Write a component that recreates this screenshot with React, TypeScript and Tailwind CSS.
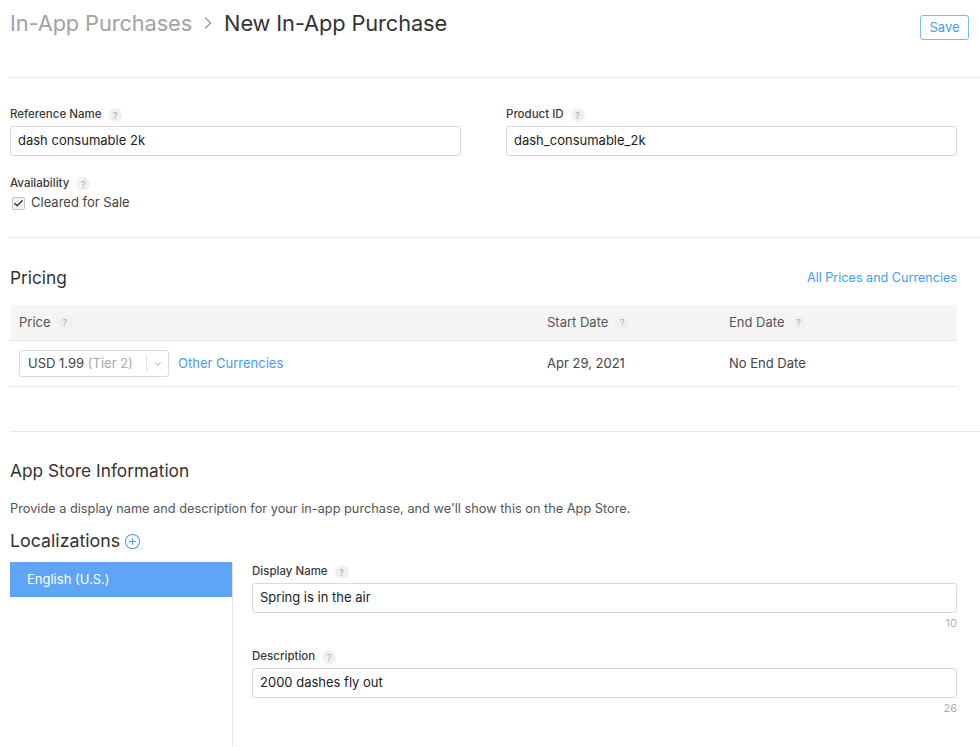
import { ChevronRight, ChevronDown, Check, CirclePlus } from 'lucide-react';

const font = { fontFamily: 'Inter, "Helvetica Neue", Arial, sans-serif' };

function Help() {
  return (
    <span className="ml-[7px] inline-flex h-[14px] w-[14px] items-center justify-center rounded-full bg-[#f0f0f0] text-[9px] font-normal leading-none text-[#a8a8a8]">
      ?
    </span>
  );
}

function Label({ children }: { children: React.ReactNode }) {
  return (
    <div className="flex h-[16px] items-center text-[11.5px] font-medium text-[#3a3a3a]">
      {children}
      <Help />
    </div>
  );
}

function TextBox({ value }: { value: string }) {
  return (
    <div className="flex h-[30px] items-center rounded-[3px] border border-[#d9d9d9] bg-white px-[7px] text-[13px] text-[#222]">
      {value}
    </div>
  );
}

export default function App() {
  return (
    <div className="min-h-[747px] w-full bg-white pl-[10px] text-[#333]" style={font}>
      {/* Cabeçalho */}
      <div className="flex h-[78px] items-start justify-between border-b border-[#e6e6e6] pr-[11px]">
        <div className="mt-[8px] flex items-center text-[21.8px] leading-[30px] tracking-[-0.005em]">
          <span className="text-[#a3a3a3]">In-App Purchases</span>
          <ChevronRight className="mx-[6px] h-[20px] w-[20px] text-[#9a9a9a]" strokeWidth={1.6} />
          <span className="text-[#333]">New In-App Purchase</span>
        </div>
        <button className="mt-[15px] h-[25px] w-[49px] rounded-[3px] border border-[#7fb8f6] text-[13px] text-[#4a9bf0]">
          Save
        </button>
      </div>

      {/* Dados gerais */}
      <div className="border-b border-[#e6e6e6] pb-[26px] pr-[23px] pt-[29px]">
        <div className="grid grid-cols-2 gap-[45px]">
          <div>
            <Label>Reference Name</Label>
            <div className="mt-[3px]">
              <TextBox value="dash consumable 2k" />
            </div>
          </div>
          <div>
            <Label>Product ID</Label>
            <div className="mt-[3px]">
              <TextBox value="dash_consumable_2k" />
            </div>
          </div>
        </div>
        <div className="mt-[20px]">
          <Label>Availability</Label>
          <div className="mt-[3px] flex h-[16px] items-center text-[13px] text-[#444]">
            <span className="ml-[2px] mr-[6px] flex h-[13px] w-[13px] items-center justify-center rounded-[2px] border border-[#c4c4c4] bg-[#f2f2f2]">
              <Check className="h-[11px] w-[11px] text-[#333]" strokeWidth={3} />
            </span>
            Cleared for Sale
          </div>
        </div>
      </div>

      {/* Preços */}
      <div className="border-b border-[#e6e6e6] pb-[44px] pr-[23px] pt-[28px]">
        <div className="flex h-[24px] items-center justify-between">
          <h2 className="text-[17.3px] font-normal text-[#333]">Pricing</h2>
          <a className="text-[12.6px] text-[#4a9bf0]">All Prices and Currencies</a>
        </div>
        <div className="mt-[15px]">
          <div className="grid h-[36px] grid-cols-[528px_182px_1fr] items-center rounded-t-[3px] border-b border-[#e3e3e3] bg-[#f5f5f5] text-[13px] text-[#555]">
            <div className="flex items-center pl-[9px]">Price<Help /></div>
            <div className="flex items-center pl-[9px]">Start Date<Help /></div>
            <div className="flex items-center pl-[9px]">End Date<Help /></div>
          </div>
          <div className="grid h-[46px] grid-cols-[528px_182px_1fr] items-center border-b border-[#e6e6e6] text-[13px] text-[#444]">
            <div className="flex items-center pl-[9px]">
              <div className="flex h-[27px] w-[150px] items-center rounded-[3px] border border-[#dadada] bg-white">
                <span className="flex-1 pl-[8px] text-[#444]">
                  USD 1.99 <span className="text-[#a8a8a8]">(Tier 2)</span>
                </span>
                <span className="h-[17px] w-px bg-[#e2e2e2]" />
                <span className="flex w-[21px] justify-center">
                  <ChevronDown className="h-[10px] w-[10px] text-[#888]" strokeWidth={2} />
                </span>
              </div>
              <a className="ml-[9px] text-[13px] text-[#4a9bf0]">Other Currencies</a>
            </div>
            <div className="pl-[9px]">Apr 29, 2021</div>
            <div className="pl-[9px]">No End Date</div>
          </div>
        </div>
      </div>

      {/* Informações da App Store */}
      <div className="pr-[23px] pt-[27px]">
        <h2 className="flex h-[24px] items-center text-[17.3px] font-normal text-[#333]">App Store Information</h2>
        <p className="mt-[18px] flex h-[16px] items-center text-[12.75px] text-[#555]">
          Provide a display name and description for your in-app purchase, and we'll show this on the App Store.
        </p>
        <div className="mt-[12px] flex h-[24px] items-center text-[17.8px] text-[#333]">
          Localizations
          <CirclePlus className="ml-[4px] h-[17px] w-[17px] text-[#4a9bf0]" strokeWidth={1.5} />
        </div>
        <div className="mt-[9px] flex">
          <div className="w-[223px] shrink-0 border-r border-[#e6e6e6]">
            <div className="flex h-[35px] items-center bg-[#5ea6f5] pl-[17px] text-[13px] text-white">
              English (U.S.)
            </div>
          </div>
          <div className="flex-1 pb-[30px] pl-[19px] pt-[2px]">
            <Label>Display Name</Label>
            <div className="mt-[3px]">
              <TextBox value="Spring is in the air" />
            </div>
            <div className="mt-[2px] text-right text-[11px] leading-[16px] text-[#b0b0b0]">10</div>
            <div className="mt-[18px]">
              <Label>Description</Label>
            </div>
            <div className="mt-[3px]">
              <TextBox value="2000 dashes fly out" />
            </div>
            <div className="mt-[2px] text-right text-[11px] leading-[16px] text-[#b0b0b0]">26</div>
          </div>
        </div>
      </div>
    </div>
  );
}
